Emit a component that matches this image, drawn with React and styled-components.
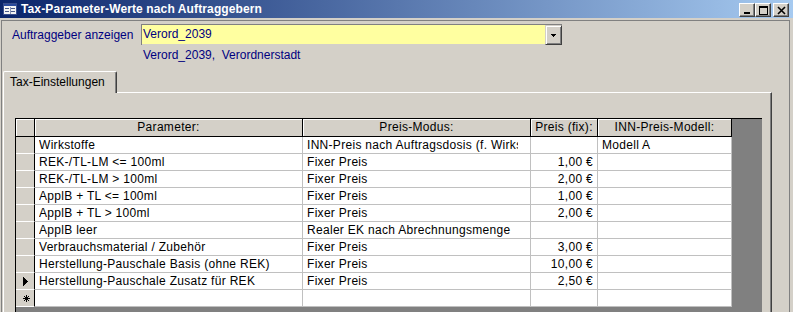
import styled, { createGlobalStyle } from "styled-components";

const GlobalStyle = createGlobalStyle`
  html, body {
    margin: 0;
    padding: 0;
    background: #d4d0c8;
  }
  body {
    font-family: "Liberation Sans", Arial, sans-serif;
    font-size: 12px;
    color: #000;
  }
  * {
    box-sizing: border-box;
  }
`;

const columns = [
  { key: "param", label: "Parameter:", width: 268 },
  { key: "mode", label: "Preis-Modus:", width: 228, padRight: 12 },
  { key: "price", label: "Preis (fix):", width: 67, align: "right" },
  { key: "model", label: "INN-Preis-Modell:", width: 134 },
];

const rows = [
  {
    param: "Wirkstoffe",
    mode: "INN-Preis nach Auftragsdosis (f. Wirkstoffe)",
    price: "",
    model: "Modell A",
  },
  { param: "REK-/TL-LM <= 100ml", mode: "Fixer Preis", price: "1,00 €" },
  { param: "REK-/TL-LM > 100ml", mode: "Fixer Preis", price: "2,00 €" },
  { param: "ApplB + TL <= 100ml", mode: "Fixer Preis", price: "1,00 €" },
  { param: "ApplB + TL > 100ml", mode: "Fixer Preis", price: "2,00 €" },
  { param: "ApplB leer", mode: "Realer EK nach Abrechnungsmenge", price: "" },
  { param: "Verbrauchsmaterial / Zubehör", mode: "Fixer Preis", price: "3,00 €" },
  {
    param: "Herstellung-Pauschale Basis (ohne REK)",
    mode: "Fixer Preis",
    price: "10,00 €",
  },
  {
    param: "Herstellung-Pauschale Zusatz für REK",
    mode: "Fixer Preis",
    price: "2,50 €",
    current: true,
  },
  { isNew: true },
];

const FormIcon = () => (
  <svg width="14" height="12" viewBox="0 0 14 12" shapeRendering="crispEdges">
    <rect x="0.5" y="0.5" width="13" height="11" fill="#f4f4f4" stroke="#3a4e8c" />
    <rect x="1" y="1" width="12" height="2" fill="#2a4a9c" />
    <rect x="2" y="5" width="4" height="1" fill="#4a5a8a" />
    <rect x="8" y="5" width="4" height="1" fill="#4a5a8a" />
    <rect x="2" y="8" width="4" height="1" fill="#4a5a8a" />
    <rect x="8" y="8" width="4" height="1" fill="#4a5a8a" />
    <rect x="7" y="4" width="1" height="7" fill="#8a94b4" />
  </svg>
);

const MinGlyph = () => (
  <svg width="9" height="9" viewBox="0 0 9 9" shapeRendering="crispEdges">
    <rect x="1" y="6" width="6" height="2" fill="#000" />
  </svg>
);

const MaxGlyph = () => (
  <svg width="9" height="9" viewBox="0 0 9 9" shapeRendering="crispEdges">
    <rect x="0.5" y="0.5" width="8" height="8" fill="none" stroke="#000" />
    <rect x="0" y="1" width="9" height="1" fill="#000" />
  </svg>
);

const CloseGlyph = () => (
  <svg width="9" height="9" viewBox="0 0 9 9">
    <path d="M1 1 L8 8 M8 1 L1 8" stroke="#000" strokeWidth="1.6" />
  </svg>
);

const CurrentArrow = () => (
  <svg width="5" height="9" viewBox="0 0 5 9" shapeRendering="crispEdges">
    <polygon points="0,0 5,4.5 0,9" fill="#000" />
  </svg>
);

const NewStar = () => (
  <svg width="7" height="7" viewBox="0 0 7 7" shapeRendering="crispEdges">
    <path d="M3.5 0 V7 M0 3.5 H7 M1 1 L6 6 M6 1 L1 6" stroke="#000" strokeWidth="1" />
  </svg>
);

export default function App() {
  return (
    <>
      <GlobalStyle />
      <Window>
        <TitleBar>
          <FormIcon />
          <Title>Tax-Parameter-Werte nach Auftraggebern</Title>
          <Controls>
            <CaptionButton>
              <MinGlyph />
            </CaptionButton>
            <CaptionButton>
              <MaxGlyph />
            </CaptionButton>
            <CaptionButton $gap>
              <CloseGlyph />
            </CaptionButton>
          </Controls>
        </TitleBar>

        <Client>
          <FilterGrid>
            <Label>Auftraggeber anzeigen</Label>
            <Combo>
              <ComboValue>Verord_2039</ComboValue>
              <DropButton>
                <svg width="5" height="3" viewBox="0 0 5 3" shapeRendering="crispEdges">
                  <polygon points="0,0 5,0 2.5,3" fill="#000" />
                </svg>
              </DropButton>
            </Combo>
            <span />
            <Detail>{"Verord_2039,  Verordnerstadt"}</Detail>
          </FilterGrid>

          <TabStrip>
            <Tab>Tax-Einstellungen</Tab>
            <TabLine />
          </TabStrip>

          <Panel>
            <SheetArea>
              <Sheet>
                <HeadCell $selector />
                {columns.map((col) => (
                  <HeadCell key={col.key}>{col.label}</HeadCell>
                ))}

                {rows.map((row, i) => [
                  <Selector key={`s${i}`}>
                    {row.current && <CurrentArrow />}
                    {row.isNew && <NewStar />}
                  </Selector>,
                  ...columns.map((col) => (
                    <Cell
                      key={`${col.key}${i}`}
                      $align={col.align}
                      $padRight={col.padRight}
                    >
                      <CellText>{row[col.key] || ""}</CellText>
                    </Cell>
                  )),
                ])}
              </Sheet>
            </SheetArea>
          </Panel>
        </Client>
      </Window>
    </>
  );
}

const Window = styled.div`
  width: 793px;
  height: 312px;
  display: flex;
  flex-direction: column;
  overflow: hidden;
  background: #d4d0c8;
`;

const TitleBar = styled.div`
  height: 18px;
  flex: none;
  display: flex;
  align-items: center;
  padding-left: 3px;
  background: linear-gradient(to right, #0a246a, #a6caf0);
  svg {
    flex: none;
  }
`;

const Title = styled.span`
  margin-left: 4px;
  color: #fff;
  font-weight: bold;
  font-size: 12px;
  letter-spacing: 0.12px;
  white-space: nowrap;
`;

const Controls = styled.div`
  margin-left: auto;
  align-self: flex-start;
  display: flex;
  padding: 3px 4px 0 0;
`;

const CaptionButton = styled.div`
  width: 16px;
  height: 14px;
  margin-left: ${(p) => (p.$gap ? "2px" : "0")};
  display: flex;
  align-items: center;
  justify-content: center;
  background: #d4d0c8;
  border: 1px solid;
  border-color: #fff #404040 #404040 #fff;
  box-shadow: inset -1px -1px #808080;
`;

const Client = styled.div`
  flex: 1;
  min-height: 0;
  margin: 2px 3px 0 1px;
  border: 1px solid #808080;
  border-bottom: none;
  display: flex;
  flex-direction: column;
`;

const FilterGrid = styled.div`
  display: grid;
  grid-template-columns: 129px 421px;
  row-gap: 3px;
  align-items: center;
  padding: 3px 0 0 10px;
`;

const Label = styled.span`
  color: #000080;
  white-space: nowrap;
`;

const Combo = styled.div`
  height: 21px;
  display: flex;
  border-top: 1px solid #808080;
  border-left: 1px solid #808080;
`;

const ComboValue = styled.div`
  flex: 1;
  background: #ffffa0;
  color: #000080;
  line-height: 19px;
  padding-left: 1px;
  margin-bottom: 1px;
`;

const DropButton = styled.div`
  width: 17px;
  display: flex;
  align-items: center;
  justify-content: center;
  background: #d4d0c8;
  border: 1px solid;
  border-color: #d4d0c8 #404040 #404040 #d4d0c8;
  box-shadow: inset 1px 1px #fff, inset -1px -1px #808080;
`;

const Detail = styled.span`
  padding-left: 2px;
  color: #000080;
  line-height: 14px;
  white-space: pre;
`;

const TabStrip = styled.div`
  width: 769px;
  height: 22px;
  flex: none;
  margin: 9px 0 0 1px;
  display: flex;
`;

const Tab = styled.div`
  width: 114px;
  height: 22px;
  padding-left: 6px;
  line-height: 20px;
  border-top: 1px solid #fff;
  border-left: 1px solid #fff;
  border-right: 1px solid #404040;
  border-top-left-radius: 2px;
  border-top-right-radius: 2px;
  box-shadow: inset -1px 0 #808080;
  white-space: nowrap;
`;

const TabLine = styled.div`
  flex: 1;
  border-bottom: 1px solid #fff;
  border-right: 1px solid #404040;
  box-shadow: inset -1px 0 #808080;
  margin-top: 21px;
`;

const Panel = styled.div`
  width: 769px;
  flex: 1;
  min-height: 0;
  margin-left: 1px;
  padding: 25px 0 0 11px;
  border-left: 1px solid #fff;
  border-right: 1px solid #404040;
  box-shadow: inset -1px 0 #808080;
  display: flex;
  flex-direction: column;
`;

const SheetArea = styled.div`
  width: 747px;
  flex: 1;
  min-height: 0;
  overflow: hidden;
  background: #808080;
  border-top: 1px solid #000;
  border-left: 1px solid #000;
`;

const Sheet = styled.div`
  display: grid;
  width: max-content;
  grid-template-columns: ${columns.reduce((s, c) => s + ` ${c.width}px`, "19px")};
  grid-template-rows: 18px;
  grid-auto-rows: 17px;
  letter-spacing: 0.3px;
`;

const HeadCell = styled.div`
  background: #d4d0c8;
  border-right: 1px solid #000;
  border-bottom: 1px solid #000;
  box-shadow: inset 1px 1px #fff;
  text-align: center;
  line-height: 17px;
  overflow: hidden;
  white-space: nowrap;
  letter-spacing: ${(p) => (p.$selector ? "0" : "0.3px")};
`;

const Selector = styled.div`
  display: flex;
  align-items: center;
  padding-left: 7px;
  background: #d4d0c8;
  border-right: 1px solid #000;
  border-bottom: 1px solid #fff;
`;

const Cell = styled.div`
  background: #fff;
  border-right: 1px solid #c0c0c0;
  border-bottom: 1px solid #c0c0c0;
  padding: 0 ${(p) => p.$padRight || 4}px 0 4px;
  line-height: 16px;
  text-align: ${(p) => p.$align || "left"};
  min-width: 0;
`;

const CellText = styled.span`
  display: block;
  overflow: hidden;
  white-space: nowrap;
`;
